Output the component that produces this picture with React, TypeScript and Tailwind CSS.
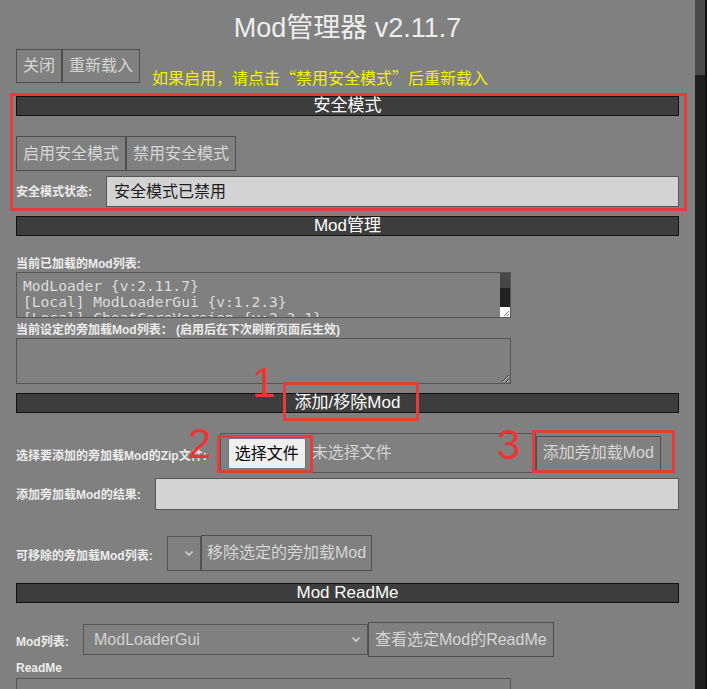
import React from 'react';

const sans = { fontFamily: '"Liberation Sans", "Noto Sans CJK SC", sans-serif' };
const cjk = { fontFamily: '"Noto Sans CJK SC", "Liberation Sans", sans-serif' };
const mono = { fontFamily: '"DejaVu Sans Mono", "Liberation Mono", "Noto Sans CJK SC", monospace' };

const SectionHeader = ({ title, className = '' }: { title: string; className?: string }) => (
  <div className={`h-[20px] border border-[#111] bg-[#3d3d3d] text-center text-[17px] leading-[18px] text-white ${className}`}>
    {title}
  </div>
);

const Btn = ({ children, className = 'h-[34px]' }: { children: React.ReactNode; className?: string }) => (
  <button className={`border border-[#4e4e4e] px-[6px] text-[16px] leading-[18px] text-[#d6d6d6] whitespace-nowrap ${className}`}>
    {children}
  </button>
);

const Label = ({ children, className = '' }: { children: React.ReactNode; className?: string }) => (
  <div className={`text-[12px] font-bold leading-[16px] text-[#ececec] whitespace-nowrap ${className}`}>{children}</div>
);

const Chevron = () => (
  <svg width="10" height="7" viewBox="0 0 10 7" className="shrink-0">
    <path d="M1.5 1.5 L5 5 L8.5 1.5" fill="none" stroke="#d0d0d0" strokeWidth="1.6" />
  </svg>
);

const Annotation = ({ className }: { className: string }) => (
  <div className={`absolute border-[3px] border-[#e63c3c] pointer-events-none ${className}`} />
);

const Digit = ({ n, className }: { n: string; className: string }) => (
  <div className={`absolute text-[#ee3434] text-[42px] leading-none font-light ${className}`} style={sans}>
    {n}
  </div>
);

export default function App() {
  return (
    <div className="flex w-[707px] h-[689px] overflow-hidden bg-[#808080]" style={sans}>
      <div className="relative w-[695px] shrink-0 px-4">
        <div className="h-[49px] flex items-center justify-center text-[27px] text-[#eeeeee] pt-[7px]">
          Mod管理器 v2.11.7
        </div>

        <div className="flex items-end">
          <Btn>关闭</Btn>
          <Btn>重新载入</Btn>
          <span className="ml-[12px] -mb-[4px] text-[16px] leading-[20px] text-[#f2f200]" style={cjk}>
            如果启用，请点击“禁用安全模式”后重新载入
          </span>
        </div>

        <SectionHeader title="安全模式" className="mt-[13px]" />

        <div className="mt-[20px] flex">
          <Btn className="h-[35px]">启用安全模式</Btn>
          <Btn className="h-[35px]">禁用安全模式</Btn>
        </div>
        <div className="mt-[5px] flex items-center">
          <Label className="w-[90px]">安全模式状态:</Label>
          <div className="flex-1 h-[31px] border border-[#555] bg-[#d3d3d3] px-[7px] text-[16px] leading-[29px] text-[#1e1e1e]">
            安全模式已禁用
          </div>
        </div>

        <SectionHeader title="Mod管理" className="mt-[9px]" />

        <Label className="mt-[20px]">当前已加载的Mod列表:</Label>
        <div className="flex w-[495px] h-[46px] border border-[#555] overflow-hidden">
          <div className="flex-1 px-[6px] pt-[5px] text-[14.6px] leading-[16px] text-[#dcdcdc] whitespace-pre" style={mono}>
            {'ModLoader {v:2.11.7}\n[Local] ModLoaderGui {v:1.2.3}\n[Local] CheatCoreVersion {v:2.3.1}'}
          </div>
          <div className="w-[10px] flex flex-col">
            <div className="h-[15px] bg-[#464646]" />
            <div className="h-[19px] bg-[#222]" />
            <div className="flex-1 bg-white relative">
              <svg width="10" height="10" viewBox="0 0 10 10" className="absolute right-0 bottom-0">
                <path d="M9 4 L4 9 M9 7 L7 9" stroke="#777" strokeWidth="1" />
              </svg>
            </div>
          </div>
        </div>

        <Label className="mt-[4px]">当前设定的旁加载Mod列表： (启用后在下次刷新页面后生效)</Label>
        <textarea readOnly className="block w-[495px] h-[46px] border border-[#555] bg-transparent" />

        <SectionHeader title="添加/移除Mod" className="mt-[9px]" />

        <div className="mt-[20px] flex items-center">
          <Label className="mt-[6px]">选择要添加的旁加载Mod的Zip文件:</Label>
          <div className="ml-[13px] w-[316px] h-[40px] border border-[#555] flex items-center pl-[7px]">
            <span className="h-[31px] border border-[#767676] rounded-[2px] bg-[#efefef] px-[6px] text-[16px] leading-[29px] text-black">
              选择文件
            </span>
            <span className="ml-[6px] text-[16px] text-[#d4d4d4]">未选择文件</span>
          </div>
          <button className="h-[35px] border border-[#4e4e4e] px-[6px] text-[16px] text-[#d6d6d6] whitespace-nowrap">
            添加旁加载Mod
          </button>
        </div>

        <div className="mt-[5px] flex items-center">
          <Label className="w-[139px] mt-[2px]">添加旁加载Mod的结果:</Label>
          <div className="flex-1 h-[32px] border border-[#555] bg-[#d3d3d3]" />
        </div>

        <div className="mt-[25px] flex items-center">
          <Label className="w-[151px] mt-[6px]">可移除的旁加载Mod列表:</Label>
          <div className="w-[34px] h-[35px] border border-[#555] flex items-center justify-end pr-[6px]">
            <Chevron />
          </div>
          <button className="h-[36px] border border-[#4e4e4e] px-[5px] text-[16px] text-[#d6d6d6] whitespace-nowrap">
            移除选定的旁加载Mod
          </button>
        </div>

        <SectionHeader title="Mod ReadMe" className="mt-[12px]" />

        <div className="mt-[19px] flex items-center">
          <Label className="w-[67px] mt-[5px]">Mod列表:</Label>
          <div className="w-[285px] h-[31px] border border-[#555] flex items-center justify-between pl-[10px] pr-[6px] text-[16px] text-[#d2d2d2]">
            <span>ModLoaderGui</span>
            <Chevron />
          </div>
          <button className="h-[35px] border border-[#4e4e4e] px-[6px] text-[16px] text-[#d6d6d6] whitespace-nowrap">
            查看选定Mod的ReadMe
          </button>
        </div>

        <Label className="mt-[3px]">ReadMe</Label>
        <textarea readOnly className="block mt-[2px] w-[495px] h-[46px] border border-[#555] bg-transparent" />

        {/* red annotations drawn over the screenshot */}
        <Annotation className="left-[10px] top-[93px] w-[677px] h-[118px]" />
        <Annotation className="left-[283px] top-[382px] w-[136px] h-[39px]" />
        <Annotation className="left-[217px] top-[435px] w-[96px] h-[38px]" />
        <Annotation className="left-[532px] top-[430px] w-[143px] h-[43px]" />
        <Digit n="1" className="left-[252px] top-[362px]" />
        <Digit n="2" className="left-[188px] top-[423px]" />
        <Digit n="3" className="left-[497px] top-[424px]" />
      </div>

      <div className="w-[10px] shrink-0 flex flex-col">
        <div className="h-[75px] bg-[#4a4a4a]" />
        <div className="flex-1 bg-[#1f1f1f]" />
      </div>
      <div className="w-[2px] shrink-0 bg-[#111]" />
    </div>
  );
}
